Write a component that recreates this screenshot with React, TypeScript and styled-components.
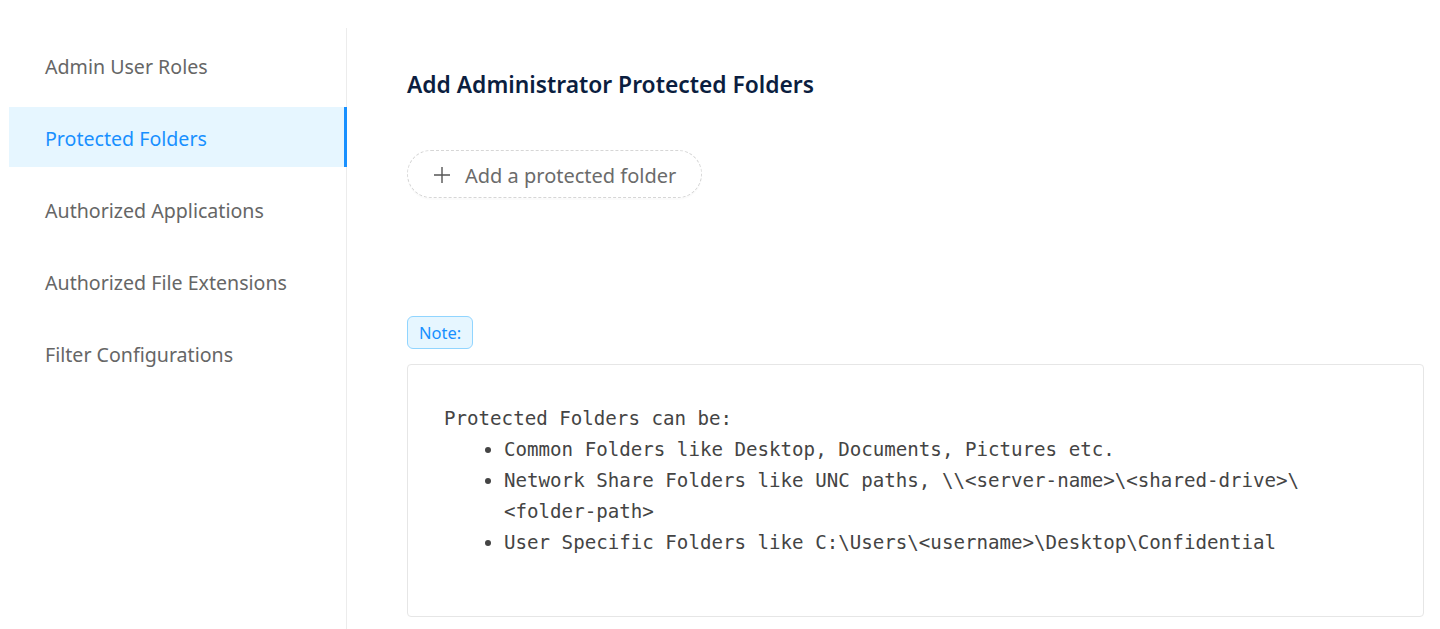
import React from "react";
import styled, { createGlobalStyle } from "styled-components";

const Global = createGlobalStyle`
  html, body { margin: 0; padding: 0; background: #ffffff; }
  body { font-family: "Noto Sans", "Open Sans", sans-serif; }
  * { box-sizing: border-box; }
`;

const Page = styled.div`
  display: flex;
  align-items: flex-start;
  min-height: 629px;
`;

const Sidebar = styled.nav`
  margin: 28px 0 0 9px;
  width: 338px;
  min-height: 601px;
  border-right: 1px solid #ececec;
  padding-top: 7px;
  display: flex;
  flex-direction: column;
  gap: 12px;
`;

const MenuItem = styled.div<{ $active?: boolean }>`
  height: 60px;
  display: flex;
  align-items: center;
  padding: 2px 0 0 36px;
  font-size: 19.6px;
  color: ${(p) => (p.$active ? "#1890ff" : "#666666")};
  background: ${(p) => (p.$active ? "#e6f6ff" : "transparent")};
  border-right: 3px solid ${(p) => (p.$active ? "#1890ff" : "transparent")};
  margin-right: -1px;
`;

const Main = styled.main`
  flex: 1;
  padding: 70px 16px 0 60px;
  display: flex;
  flex-direction: column;
  align-items: flex-start;
`;

const Heading = styled.h2`
  margin: 0;
  font-size: 22.8px;
  line-height: 30px;
  font-weight: 600;
  color: #0b1e3f;
`;

const AddButton = styled.button`
  margin-top: 50px;
  height: 48px;
  width: 295px;
  border: 1px dashed #d6d6d6;
  border-radius: 24px;
  background: #ffffff;
  display: flex;
  align-items: center;
  gap: 14px;
  padding: 2px 0 0 25px;
  font-family: inherit;
  font-size: 20px;
  color: #6b6b6b;
  box-shadow: 0 2px 0 rgba(0, 0, 0, 0.015);
`;

const NoteTag = styled.span`
  margin-top: 118px;
  height: 33px;
  padding: 0 11px;
  display: inline-flex;
  align-items: center;
  background: #e6f6ff;
  border: 1px solid #91d5ff;
  border-radius: 6px;
  color: #1890ff;
  font-size: 16.5px;
`;

const CodeBox = styled.div`
  margin-top: 15px;
  align-self: stretch;
  height: 253px;
  border: 1px solid #e6e6e6;
  border-radius: 4px;
  padding: 38px 36px 0 36px;
  font-family: "DejaVu Sans Mono", "Liberation Mono", monospace;
  font-size: 19.15px;
  line-height: 31px;
  color: #444444;
`;

const CodeLine = styled.div``;

const BulletList = styled.ul`
  margin: 0;
  padding-left: 60px;
  list-style: disc;
`;

const Bullet = styled.li`
  padding-left: 0;
`;

const NoWrap = styled.span`
  white-space: nowrap;
`;

const Plus = () => (
  <svg width="18" height="18" viewBox="0 0 18 18" fill="none">
    <path d="M9 1v16M1 9h16" stroke="#555" strokeWidth="1.4" />
  </svg>
);

const items = [
  "Admin User Roles",
  "Protected Folders",
  "Authorized Applications",
  "Authorized File Extensions",
  "Filter Configurations",
];

export default function App() {
  return (
    <>
      <Global />
      <Page>
        <Sidebar>
          {items.map((t) => (
            <MenuItem key={t} $active={t === "Protected Folders"}>
              {t}
            </MenuItem>
          ))}
        </Sidebar>
        <Main>
          <Heading>Add Administrator Protected Folders</Heading>
          <AddButton>
            <Plus />
            Add a protected folder
          </AddButton>
          <NoteTag>Note:</NoteTag>
          <CodeBox>
            <CodeLine>Protected Folders can be:</CodeLine>
            <BulletList>
              <Bullet>Common Folders like Desktop, Documents, Pictures etc.</Bullet>
              <Bullet>
                Network Share Folders like UNC paths, <NoWrap>{"\\\\<server-name>\\<shared-drive>\\"}</NoWrap>
                <wbr />
                <NoWrap>{"<folder-path>"}</NoWrap>
              </Bullet>
              <Bullet>{"User Specific Folders like C:\\Users\\<username>\\Desktop\\Confidential"}</Bullet>
            </BulletList>
          </CodeBox>
        </Main>
      </Page>
    </>
  );
}
